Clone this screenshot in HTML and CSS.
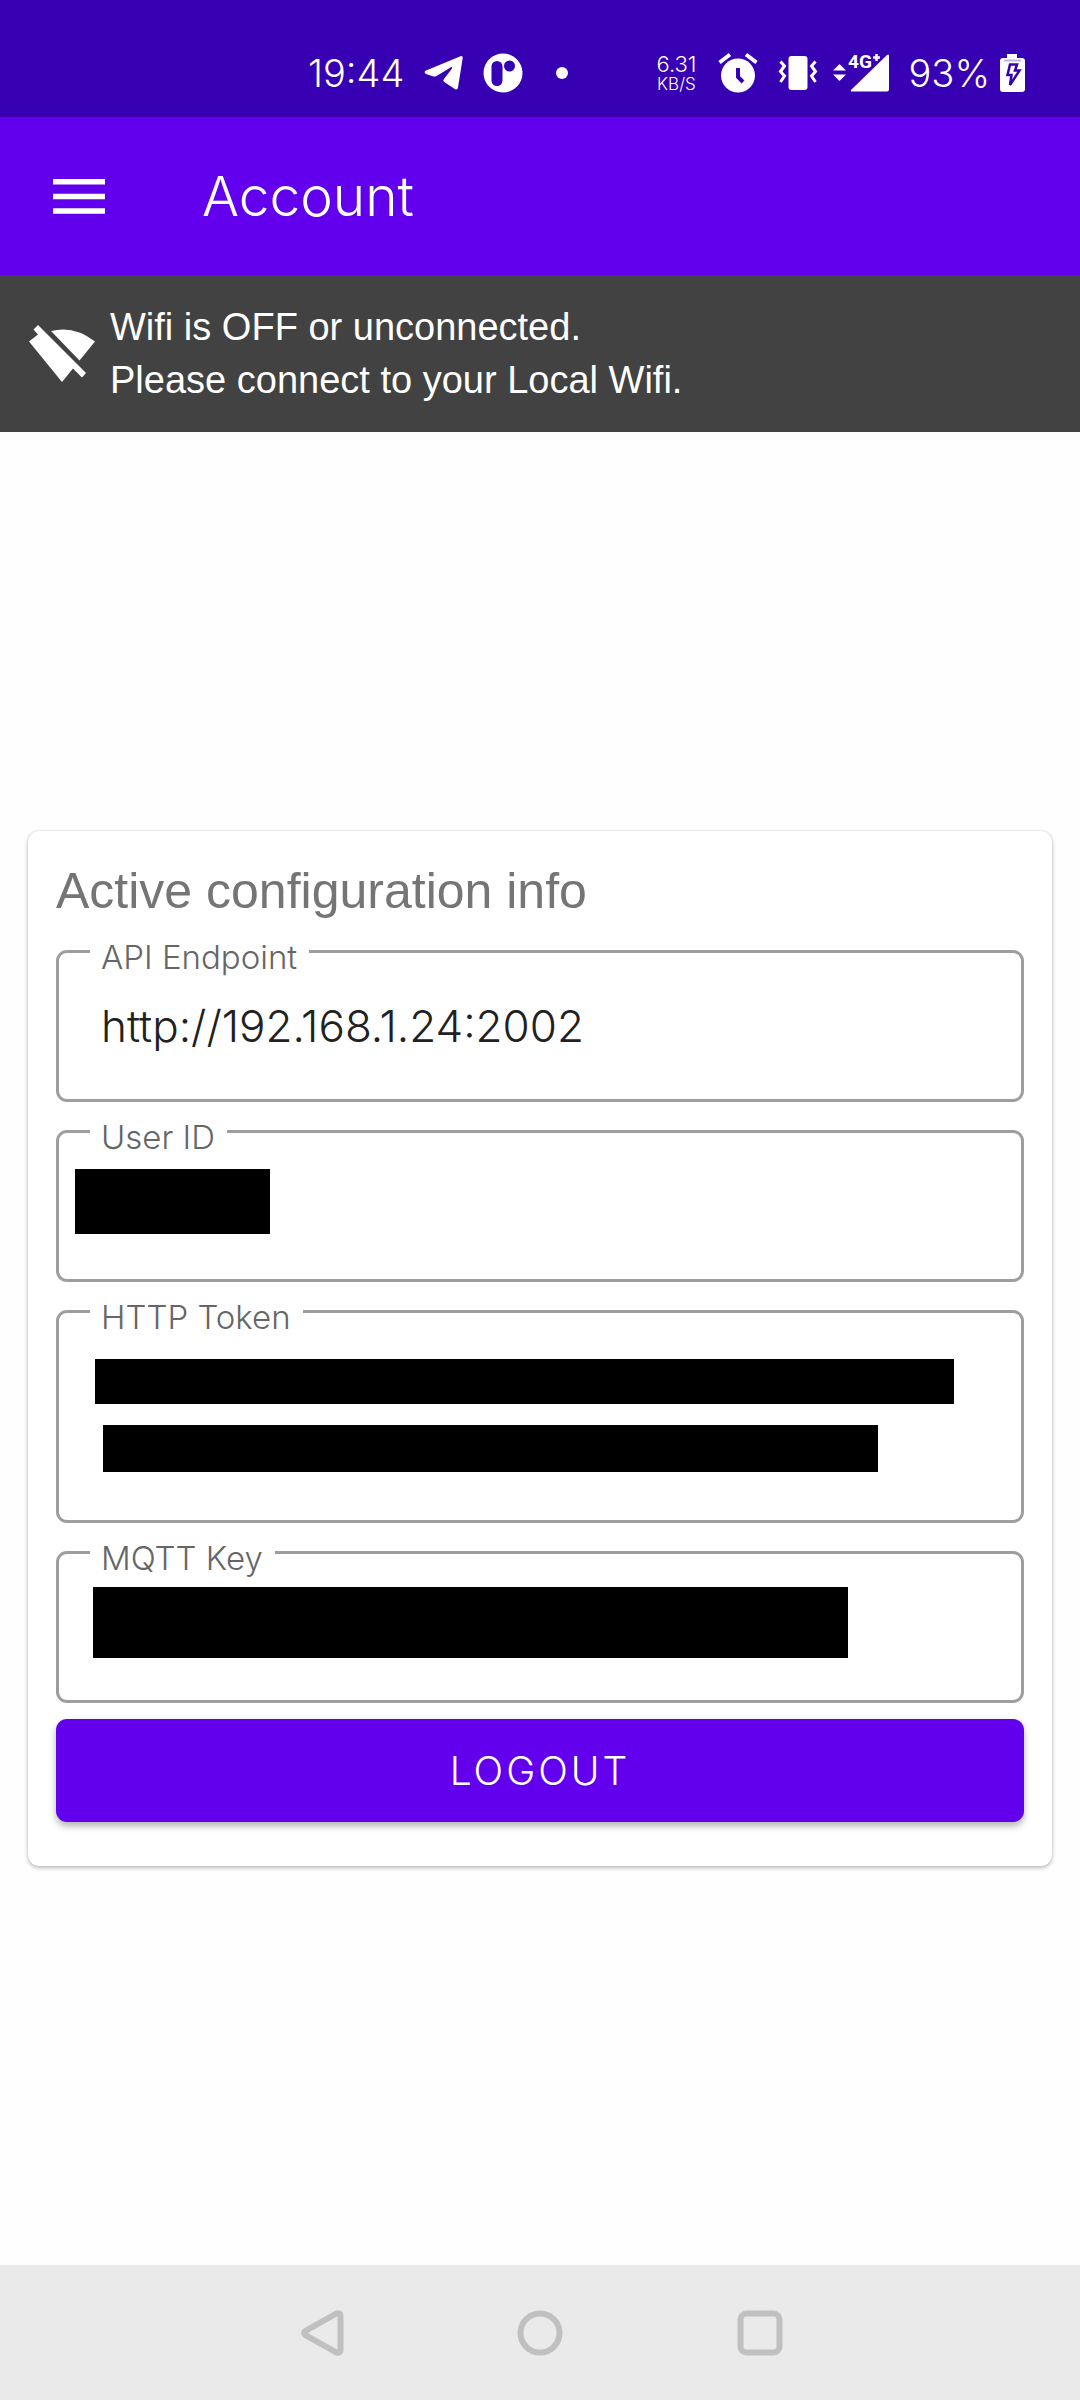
FILE: index.html
```html
<!DOCTYPE html>
<html lang="en">
<head>
<meta charset="utf-8">
<meta name="viewport" content="width=device-width, initial-scale=1">
<title>Account</title>
<link rel="stylesheet" href="styles.css">
</head>
<body>
<div class="status-bar">
  <div class="status-left">
    <time class="clock">19:44</time>
    <svg class="telegram" width="40" height="36" viewBox="0 0 40 36" fill="#fff"><path fill-rule="evenodd" d="M2 15.500L36.500 1.200Q39 .4 38.700 3L34 32.500Q33.400 35.600 30.800 34L20.200 27Q18.400 25.700 19.800 24.200L28 13.500Q28.800 11.400 26.500 12.400L12.500 21Q11 21.800 9.500 21.400L2 19Q-.8 17 2 15.500Z"/></svg>
    <svg class="app-dot" width="40" height="40" viewBox="0 0 40 40"><circle cx="20" cy="20" r="19.500" fill="#fff"/><rect x="8.500" y="8" width="11" height="25" rx="5.500" fill="#3700b3"/><circle cx="26.500" cy="13" r="5.500" fill="#3700b3"/></svg>
    <svg width="12" height="12" viewBox="0 0 12 12"><circle cx="6" cy="6" r="6" fill="#fff"/></svg>
  </div>
  <div class="status-right">
    <div class="speed"><span class="speed-value">6.31</span><span class="speed-unit">KB/S</span></div>
    <svg class="alarm" width="40" height="40" viewBox="0 0 40 40"><circle cx="20" cy="22.500" r="17" fill="#fff"/><path d="M1.500 9.500L12 1.500M38.500 9.500L28 1.500" stroke="#fff" stroke-width="4"/><path d="M20 15v9l5 5" fill="none" stroke="#3700b3" stroke-width="4"/></svg>
    <svg class="vibrate" width="38" height="36" viewBox="0 0 38 36"><rect x="9.500" y="1" width="19" height="34" rx="3" fill="#fff"/><path d="M1.500 6.500L5.500 11L1.500 16.500L5.500 21L1.500 27M36.500 6.500L32.500 11L36.500 16.500L32.500 21L36.500 27" fill="none" stroke="#fff" stroke-width="3"/></svg>
    <svg class="signal" width="56" height="40" viewBox="0 0 56 40" fill="#fff"><path d="M0 17.500L6.500 11L13 17.500ZM0 21.500H13L6.500 28Z"/><path d="M54 2q2-1.500 2 1V36.500q0 2-2 2H19.500q-3 0-1-2Z"/><text x="15" y="15" font-family="Roboto, sans-serif" font-size="19" font-weight="700">4G</text><path d="M40 4.500h7M43.500 1v7" stroke="#fff" stroke-width="2.500"/></svg>
    <span class="percent">93%</span>
    <svg class="battery" width="25" height="38" viewBox="0 0 25 38"><path d="M7 0h10v4h5q3 0 3 3v28q0 3-3 3H3q-3 0-3-3V7q0-3 3-3h4Z" fill="#fff"/><path d="M4 6.500h17" stroke="#c3b3e8" stroke-width="2"/><path d="M10 10.500h7l-2 6h4.500L10 31l1.500-10H7.500Z" fill="none" stroke="#3700b3" stroke-width="2.500"/></svg>
  </div>
</div>
<header class="app-bar">
  <button class="menu" type="button" aria-label="Open menu"><svg width="52" height="35" viewBox="0 0 52 35" fill="#fff"><path d="M0 0h52v5.500H0ZM0 14.700h52v5.500H0ZM0 29.300h52v5.500H0Z"/></svg></button>
  <h1>Account</h1>
</header>
<div class="banner" role="status">
  <svg width="66" height="58" viewBox="0 0 66 58" fill="#fff"><path d="M22 6Q45 0 66 16.500L50.500 35.500Z"/><path d="M9 0L57 48L53 52.500L44 43.500L33 57L0 16.500L9 9.500L4.500 4.500Z"/></svg>
  <p>Wifi is OFF or unconnected.<br>Please connect to your Local Wifi.</p>
</div>
<main>
  <form class="card">
    <h2>Active configuration info</h2>
    <div class="field">
      <label for="endpoint">API Endpoint</label>
      <input id="endpoint" type="text" value="http://192.168.1.24:2002" readonly>
    </div>
    <div class="field user">
      <label for="user">User ID</label>
      <output id="user"><span class="mask"></span></output>
    </div>
    <div class="field token">
      <label for="token">HTTP Token</label>
      <output id="token"><span class="mask"></span><span class="mask last"></span></output>
    </div>
    <div class="field key">
      <label for="key">MQTT Key</label>
      <output id="key"><span class="mask"></span></output>
    </div>
    <button class="logout" type="button">LOGOUT</button>
  </form>
</main>
<nav class="system-nav">
  <button type="button" aria-label="Back"><svg width="46" height="46" viewBox="-3 0 46 46"><path d="M5.500 20.800L36.500 3.500Q40.500 2.500 40.500 6V40Q40.500 43.500 36.500 42.500L5.500 25.200Q2.500 23 5.500 20.800Z"/></svg></button>
  <button type="button" aria-label="Home"><svg width="46" height="46" viewBox="0 0 46 46"><circle cx="23" cy="23" r="19.500"/></svg></button>
  <button type="button" aria-label="Recent apps"><svg width="46" height="46" viewBox="0 0 46 46"><rect x="3.500" y="3.500" width="39" height="39" rx="6"/></svg></button>
</nav>
</body>
</html>
```
FILE: styles.css
```css
* { box-sizing: border-box; }
body {
  margin: 0;
  min-height: 100vh;
  display: flex;
  flex-direction: column;
  background: #fefefe;
  font-family: Inter, "Liberation Sans", sans-serif;
  font-weight: 300;
}
svg { display: block; flex: none; overflow: visible; }
h1, h2, p { margin: 0; font-weight: 300; }
button { border: 0; padding: 0; font: inherit; background: none; }

.status-bar {
  height: 117px;
  padding: 28px 55px 0 308px;
  display: flex;
  align-items: center;
  justify-content: space-between;
  background: #3700b3;
  color: #fff;
}
.status-left, .status-right { display: flex; align-items: center; }
.clock, .percent { font-size: 38px; line-height: 48px; }
.telegram { margin-left: 20px; }
.app-dot { margin: 0 33px 0 19px; }
.speed { display: flex; flex-direction: column; align-items: center; }
.speed-value { font-size: 22px; line-height: 22px; }
.speed-unit { font-size: 17px; line-height: 18px; }
.alarm { margin-left: 21px; }
.vibrate { margin-left: 21px; }
.signal { margin-left: 16px; }
.percent { margin-left: 20px; }
.battery { margin-left: 10px; }

.app-bar {
  height: 158px;
  padding: 0 53px;
  display: flex;
  align-items: center;
  gap: 97px;
  background: #6200ee;
  color: #fff;
}
h1 { font-size: 55px; line-height: 66px; }

.banner {
  padding: 26px 29px 25px;
  display: flex;
  align-items: center;
  gap: 15px;
  background: #424242;
  color: #fff;
  font-family: "Liberation Sans", sans-serif;
  font-size: 38px;
  line-height: 53px;
}

main {
  flex: 1;
  display: flex;
  flex-direction: column;
  justify-content: center;
  padding: 28px;
}
.card {
  padding: 28px 28px 44px;
  display: flex;
  flex-direction: column;
  border-radius: 11px;
  background: #fff;
  box-shadow: 0 2px 4px rgba(0, 0, 0, .25), 0 0 2px rgba(0, 0, 0, .15);
}
h2 {
  padding-bottom: 27px;
  font-family: "Liberation Sans", sans-serif;
  font-size: 50px;
  line-height: 64px;
  font-weight: 400;
  color: #757575;
}
.field {
  position: relative;
  min-height: 152px;
  margin-bottom: 28px;
  border: 3px solid #9e9e9e;
  border-radius: 11px;
}
.field label {
  position: absolute;
  top: -16px;
  left: 31px;
  padding: 0 12px 0 11px;
  background: #fff;
  color: #666;
  font-size: 33px;
  line-height: 40px;
}
.field input {
  width: 100%;
  height: 146px;
  padding: 0 42px;
  border: 0;
  outline: 0;
  background: none;
  font: inherit;
  font-size: 44px;
  color: #212121;
}
.field output { display: flex; flex-direction: column; }
.mask { background: #000; }
.user output { padding: 36px 16px; }
.user .mask { width: 195px; height: 65px; }
.token { min-height: 213px; }
.token output { padding: 46px 67px 46px 36px; gap: 21px; }
.token .mask { height: 45px; }
.token .last { height: 47px; margin: 0 76px 0 8px; }
.key { margin-bottom: 16px; }
.key output { padding: 33px 173px 33px 34px; }
.key .mask { height: 71px; }
.logout {
  height: 103px;
  border-radius: 11px;
  background: #6200ee;
  color: #fff;
  font-size: 39px;
  letter-spacing: 3px;
  box-shadow: 0 4px 7px rgba(0, 0, 0, .3);
}

.system-nav {
  height: 135px;
  display: flex;
  align-items: center;
  justify-content: center;
  gap: 174px;
  background: #eaeaea;
}
.system-nav svg { fill: none; stroke: #c0c0c0; stroke-width: 6; }
```
